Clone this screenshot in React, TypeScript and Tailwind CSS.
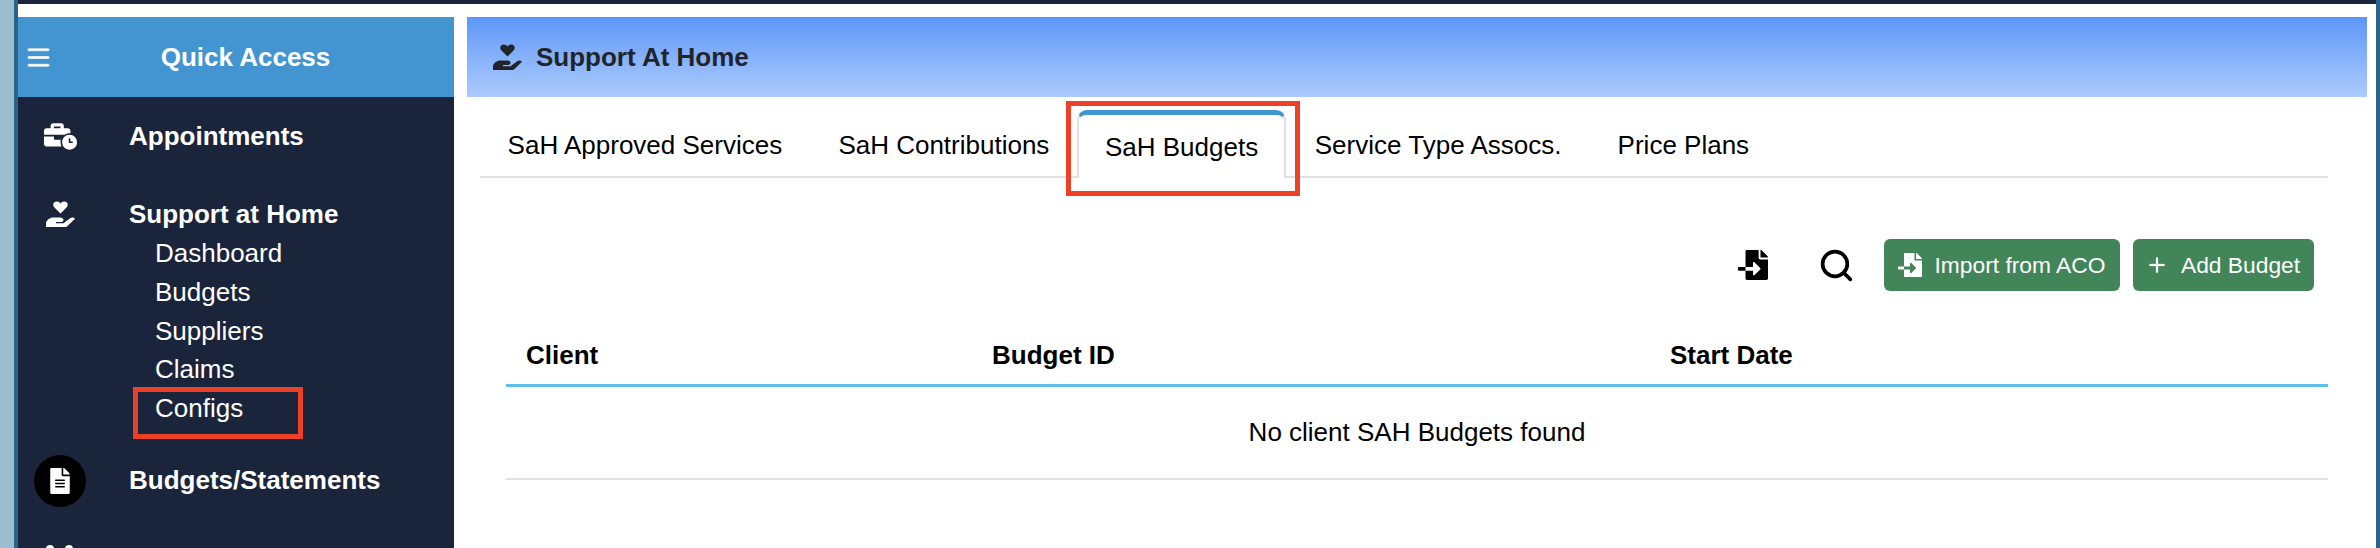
import React from "react";
import { BsList, BsPlusLg } from "react-icons/bs";
import { FaBusinessTime, FaFileAlt, FaFileImport } from "react-icons/fa";
import { Search } from "lucide-react";

const subItems = ["Dashboard", "Budgets", "Suppliers", "Claims", "Configs"];

const tabs = [
  { label: "SaH Approved Services" },
  { label: "SaH Contributions" },
  { label: "SaH Budgets", active: true },
  { label: "Service Type Assocs." },
  { label: "Price Plans" },
];

function HandHeart({ className }: { className?: string }) {
  return (
    <svg viewBox="0 0 29 26" fill="currentColor" className={className}>
      <path d="M14.5 12.5 8.5 6.5C6 4 7.5.5 10.8.5c1.7 0 3 .9 3.7 2.1C15.2 1.4 16.5.5 18.2.5c3.3 0 4.8 3.5 2.3 6Z" />
      <path d="M0 26v-4.5C1 19 4 16.5 7 16.5h7c2 0 3.5 1 3.5 2.5 0 1.3-1 2-2.500 2H10v1.300h7.500l7-5.300c1.500-1.200 4-.5 4.500.8L22 24.500c-1 1-2 1.500-3.500 1.500Z" />
    </svg>
  );
}

function Sidebar() {
  return (
    <aside className="w-[436px] shrink-0 bg-[#1a253c] text-white">
      <div className="flex h-[80px] items-center bg-[#4295d1] pl-[5px] pr-[20px]">
        <BsList className="h-[31px] w-[31px] shrink-0" strokeWidth={0.35} />
        <div className="flex-1 pl-[3px] text-center text-[26px] font-bold">Quick Access</div>
      </div>

      <div className="flex h-[78px] items-center">
        <div className="flex w-[84px] justify-center">
          <FaBusinessTime className="h-[29px] w-[33px]" />
        </div>
        <span className="ml-[27px] text-[26px] font-bold">Appointments</span>
      </div>

      <div className="flex items-center pt-[20px]">
        <div className="flex h-[39px] w-[84px] justify-center pt-[6px]">
          <HandHeart className="h-[26px] w-[29px]" />
        </div>
        <span className="ml-[27px] text-[26px] font-bold leading-[39px]">Support at Home</span>
      </div>

      <ul className="pl-[137px]">
        {subItems.map((item) => (
          <li key={item} className="h-[38.8px] text-[26px] leading-[39px]">
            {item}
          </li>
        ))}
      </ul>

      <div className="mt-[27px] flex h-[52px] items-center">
        <div className="flex w-[84px] justify-center">
          <div className="flex h-[52px] w-[52px] items-center justify-center rounded-full bg-black">
            <FaFileAlt className="h-[26px] w-[20px]" />
          </div>
        </div>
        <span className="ml-[27px] text-[26px] font-bold">Budgets/Statements</span>
      </div>

      {/* next menu item is cut off by the bottom of the shot, only the icon tops show */}
      <div className="ml-[28px] mt-[38px] flex gap-[11px]">
        <div className="h-[8px] w-[8px] rounded-full bg-white" />
        <div className="h-[8px] w-[8px] rounded-full bg-white" />
      </div>
    </aside>
  );
}

function Tabs() {
  return (
    <div className="ml-[13px] mr-[39px] flex h-[81px] items-end gap-[3px] border-b-2 border-[#dee2e6] pl-px">
      {tabs.map((tab) =>
        tab.active ? (
          <div
            key={tab.label}
            className="relative -mb-[2px] -ml-[2px] -mr-px flex h-[68px] items-start rounded-t-[10px] border-x-2 border-t-[5px] border-x-[#dee2e6] border-t-[#4295d1] bg-white px-[26px] pt-[17px] text-[26px] leading-[30px] text-black"
          >
            {tab.label}
          </div>
        ) : (
          <div
            key={tab.label}
            className="flex h-[66px] items-start border border-transparent px-[25.6px] pt-[19px] text-[26px] leading-[30px] text-black"
          >
            {tab.label}
          </div>
        ),
      )}
    </div>
  );
}

function Toolbar() {
  return (
    <div className="mr-[53px] mt-[61px] flex h-[52px] items-center justify-end text-white">
      <FaFileImport className="mr-[50px] h-[30px] w-[30px] text-black" />
      <Search className="mr-[29px] h-[37px] w-[37px] text-black" strokeWidth={2.4} />
      <button className="flex h-[52px] w-[236px] items-center justify-center gap-[12px] rounded-[6px] bg-[#418558] text-[22.8px]">
        <FaFileImport className="h-[24px] w-[24px]" />
        Import from ACO
      </button>
      <button className="ml-[13px] flex h-[52px] w-[181px] items-center justify-center gap-[14px] rounded-[6px] bg-[#418558] text-[22.8px]">
        <BsPlusLg className="h-[20px] w-[20px]" strokeWidth={0.8} />
        Add Budget
      </button>
    </div>
  );
}

function BudgetsTable() {
  return (
    <div className="ml-[39px] mr-[39px] mt-[12px] text-[26px] text-black">
      <div className="grid h-[84px] grid-cols-[466px_678px_1fr] items-center border-b-[3px] border-[#5bc0ea] pt-[23px] font-bold">
        <div className="pl-[20px]">Client</div>
        <div className="pl-[20px]">Budget ID</div>
        <div className="pl-[20px]">Start Date</div>
      </div>
      <div className="flex h-[93px] items-center justify-center border-b-2 border-[#dee2e6]">
        No client SAH Budgets found
      </div>
    </div>
  );
}

export default function App() {
  return (
    <div className="relative flex h-[548px] w-[2380px] overflow-hidden bg-white font-['Liberation_Sans',Arial,sans-serif]">
      <div className="w-[14px] shrink-0 bg-[#9cbcd0]" />
      <div className="w-[4px] shrink-0 bg-[#2a6484]" />

      <div className="flex min-w-0 flex-1 flex-col">
        <div className="h-[4px] shrink-0 bg-[#1a253c]" />
        <div className="flex min-h-0 flex-1 gap-[13px] pt-[13px]">
          <Sidebar />
          <main className="min-w-0 flex-1 pr-[9px]">
            <div className="flex h-[80px] items-center gap-[14px] bg-gradient-to-b from-[#5e96f8] to-[#adcbfc] pl-[26px] text-[#212529]">
              <HandHeart className="h-[26px] w-[29px]" />
              <span className="text-[26px] font-bold">Support At Home</span>
            </div>
            <Tabs />
            <Toolbar />
            <BudgetsTable />
          </main>
        </div>
      </div>

      <div className="w-[4px] shrink-0 bg-[#2a6484]" />

      {/* red annotation boxes from the screenshot */}
      <div className="absolute left-[133px] top-[387px] h-[52px] w-[170px] border-[5px] border-[#ec4027]" />
      <div className="absolute left-[1066px] top-[101px] h-[95px] w-[234px] border-[5px] border-[#ec4027]" />
    </div>
  );
}
